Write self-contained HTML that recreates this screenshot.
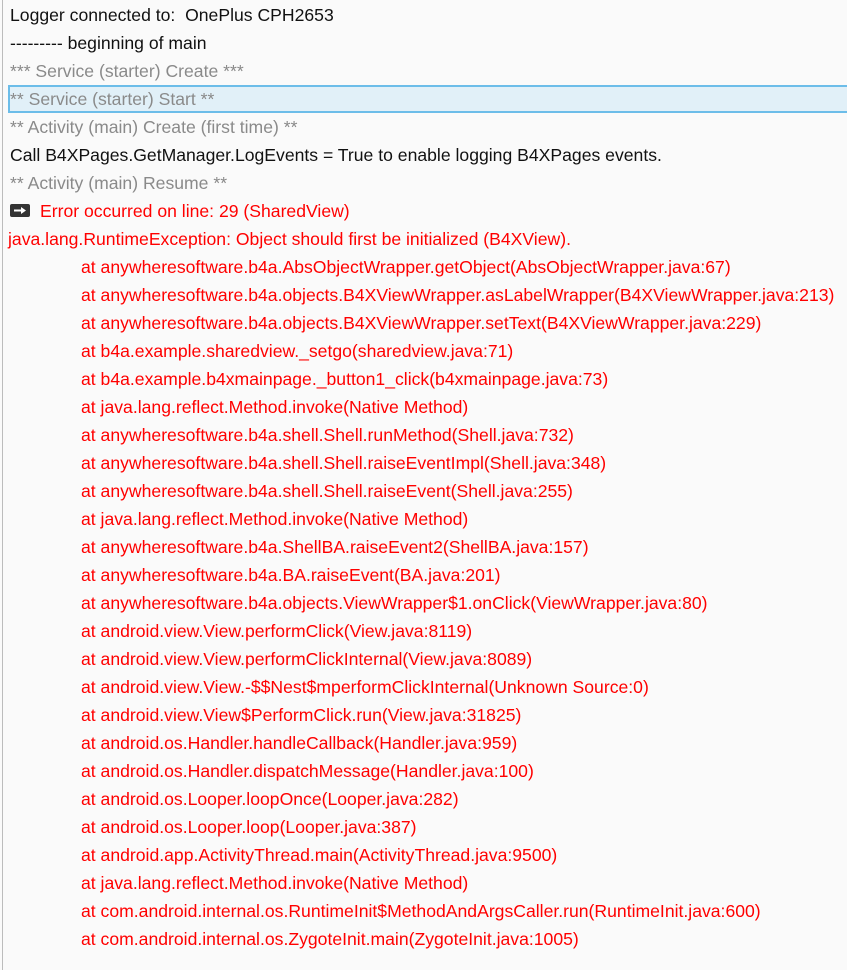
<!DOCTYPE html>
<html><head><meta charset="utf-8"><style>
html,body{margin:0;padding:0;background:#fafafa;width:847px;height:970px;overflow:hidden}
#b{position:absolute;left:2px;top:0;width:1px;height:970px;background:#bcbcbc}
#c{position:absolute;left:0;top:1px;width:847px;font-family:"Liberation Sans",sans-serif;font-size:17.6px}
.l{height:28px;line-height:29px;padding-left:10px;white-space:nowrap;box-sizing:border-box}
.k{color:#111}.g{color:#8a8a8a}.r{color:#f00}.i{padding-left:81px}
.h{background:#e1f0f8;border:2px solid #6cbde9;border-right:none;margin-left:8px;padding-left:0;line-height:25px;height:28px}
.ar{display:inline-block;width:20px;height:13px;background:#333;border-radius:2px;vertical-align:0px;margin-right:10px;position:relative}
</style></head><body><div id="b"></div><div id="c">
<div class="l k">Logger connected to:&nbsp; OnePlus CPH2653</div>
<div class="l k">--------- beginning of main</div>
<div class="l g">*** Service (starter) Create ***</div>
<div class="l g h">** Service (starter) Start **</div>
<div class="l g">** Activity (main) Create (first time) **</div>
<div class="l k">Call B4XPages.GetManager.LogEvents = True to enable logging B4XPages events.</div>
<div class="l g">** Activity (main) Resume **</div>
<div class="l r"><span class="ar"><svg width="20" height="13" viewBox="0 0 20 13" style="position:absolute;left:0;top:0"><path d="M4 5.5h7V3l5 3.5-5 3.5V7.5H4z" fill="#fff"/></svg></span>Error occurred on line: 29 (SharedView)</div>
<div class="l r" style="padding-left:8px">java.lang.RuntimeException: Object should first be initialized (B4XView).</div>
<div class="l r i">at anywheresoftware.b4a.AbsObjectWrapper.getObject(AbsObjectWrapper.java:67)</div>
<div class="l r i">at anywheresoftware.b4a.objects.B4XViewWrapper.asLabelWrapper(B4XViewWrapper.java:213)</div>
<div class="l r i">at anywheresoftware.b4a.objects.B4XViewWrapper.setText(B4XViewWrapper.java:229)</div>
<div class="l r i">at b4a.example.sharedview._setgo(sharedview.java:71)</div>
<div class="l r i">at b4a.example.b4xmainpage._button1_click(b4xmainpage.java:73)</div>
<div class="l r i">at java.lang.reflect.Method.invoke(Native Method)</div>
<div class="l r i">at anywheresoftware.b4a.shell.Shell.runMethod(Shell.java:732)</div>
<div class="l r i">at anywheresoftware.b4a.shell.Shell.raiseEventImpl(Shell.java:348)</div>
<div class="l r i">at anywheresoftware.b4a.shell.Shell.raiseEvent(Shell.java:255)</div>
<div class="l r i">at java.lang.reflect.Method.invoke(Native Method)</div>
<div class="l r i">at anywheresoftware.b4a.ShellBA.raiseEvent2(ShellBA.java:157)</div>
<div class="l r i">at anywheresoftware.b4a.BA.raiseEvent(BA.java:201)</div>
<div class="l r i">at anywheresoftware.b4a.objects.ViewWrapper$1.onClick(ViewWrapper.java:80)</div>
<div class="l r i">at android.view.View.performClick(View.java:8119)</div>
<div class="l r i">at android.view.View.performClickInternal(View.java:8089)</div>
<div class="l r i">at android.view.View.-$$Nest$mperformClickInternal(Unknown Source:0)</div>
<div class="l r i">at android.view.View$PerformClick.run(View.java:31825)</div>
<div class="l r i">at android.os.Handler.handleCallback(Handler.java:959)</div>
<div class="l r i">at android.os.Handler.dispatchMessage(Handler.java:100)</div>
<div class="l r i">at android.os.Looper.loopOnce(Looper.java:282)</div>
<div class="l r i">at android.os.Looper.loop(Looper.java:387)</div>
<div class="l r i">at android.app.ActivityThread.main(ActivityThread.java:9500)</div>
<div class="l r i">at java.lang.reflect.Method.invoke(Native Method)</div>
<div class="l r i">at com.android.internal.os.RuntimeInit$MethodAndArgsCaller.run(RuntimeInit.java:600)</div>
<div class="l r i">at com.android.internal.os.ZygoteInit.main(ZygoteInit.java:1005)</div>
</div></body></html>
